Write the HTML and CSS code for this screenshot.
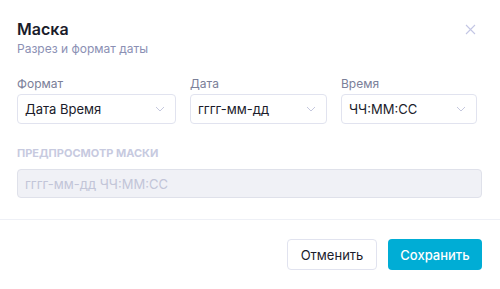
FILE: index.html
```html
<!DOCTYPE html>
<html lang="ru">
<head>
  <meta charset="UTF-8">
  <meta name="viewport" content="width=device-width, initial-scale=1.0">
  <title>Маска</title>
  <link rel="stylesheet" href="styles.css">
</head>
<body>

<div class="modal">
  <!-- Header -->
  <div class="modal-header">
    <div>
      <h2 class="modal-title">Маска</h2>
      <div class="modal-subtitle">Разрез и формат даты</div>
    </div>
    <button class="close-btn" aria-label="Закрыть">
      <svg width="11" height="11" viewBox="0 0 11 11"><path d="M1 1L10 10M10 1L1 10" stroke="#c3c6e4" stroke-width="1.1" fill="none"/></svg>
    </button>
  </div>

  <!-- Body -->
  <div class="modal-body">
    <div class="fields">
      <div class="field">
        <label>Формат</label>
        <div class="select">
          <span>Дата Время</span>
          <svg width="10" height="6" viewBox="0 0 10 6"><path d="M1 1L5 5L9 1" stroke="#c5c8de" stroke-width="1" fill="none"/></svg>
        </div>
      </div>
      <div class="field">
        <label>Дата</label>
        <div class="select">
          <span>гггг-мм-дд</span>
          <svg width="10" height="6" viewBox="0 0 10 6"><path d="M1 1L5 5L9 1" stroke="#c5c8de" stroke-width="1" fill="none"/></svg>
        </div>
      </div>
      <div class="field">
        <label>Время</label>
        <div class="select">
          <span>ЧЧ:ММ:СС</span>
          <svg width="10" height="6" viewBox="0 0 10 6"><path d="M1 1L5 5L9 1" stroke="#c5c8de" stroke-width="1" fill="none"/></svg>
        </div>
      </div>
    </div>

    <div class="preview-label">Предпросмотр маски</div>
    <div class="preview">гггг-мм-дд ЧЧ:ММ:СС</div>
  </div>

  <!-- Footer -->
  <div class="modal-footer">
    <button class="btn btn-cancel">Отменить</button>
    <button class="btn btn-save">Сохранить</button>
  </div>
</div>

</body>
</html>
```

FILE: styles.css
```css
/* General Reset */
* {
    margin: 0;
    padding: 0;
    box-sizing: border-box;
}

body {
    font-family: 'Inter', 'Noto Sans', sans-serif;
    background-color: #ffffff;
    width: 500px;
    height: 289px;
    overflow: hidden;
}

.modal {
    width: 500px;
    height: 289px;
    background-color: #ffffff;
    border-radius: 6px;
    display: flex;
    flex-direction: column;
}

.modal-header {
    display: flex;
    justify-content: space-between;
    align-items: flex-start;
    padding: 19px 24px 0 17px;
}

.modal-title {
    font-size: 16px;
    font-weight: 600;
    line-height: 20px;
    color: #1b1c2b;
}

.modal-subtitle {
    font-size: 12px;
    line-height: 16px;
    color: #8b90b4;
    margin-top: 2px;
}

.close-btn {
    border: none;
    background: none;
    margin-top: 5px;
    width: 11px;
    height: 11px;
    cursor: pointer;
}

.close-btn svg {
    display: block;
}

.modal-body {
    padding: 19px 18px 0 17px;
    border-bottom: 1px solid #eef0f6;
    height: 163px;
    flex-shrink: 0;
}

.fields {
    display: grid;
    grid-template-columns: 159px 137px 136px;
    gap: 14px;
}

.field label {
    display: block;
    font-size: 12px;
    line-height: 16px;
    color: #7b8099;
    margin-bottom: 2px;
}

.select {
    height: 30px;
    border: 1px solid #e1e3ef;
    border-radius: 4px;
    display: flex;
    align-items: center;
    justify-content: space-between;
    padding: 0 10px 0 7px;
    font-size: 13px;
    color: #1b1c2b;
}

.preview-label {
    margin-top: 22px;
    font-size: 11px;
    font-weight: 700;
    line-height: 14px;
    text-transform: uppercase;
    color: #c7cadf;
}

.preview {
    margin-top: 9px;
    width: 465px;
    height: 29px;
    background-color: #f0f1f6;
    border: 1px solid #dfe1ea;
    border-radius: 4px;
    padding: 0 7px;
    display: flex;
    align-items: center;
    font-size: 13px;
    color: #c2c5d8;
}

.modal-footer {
    display: flex;
    justify-content: flex-end;
    gap: 11px;
    padding: 19px 18px 0 17px;
}

.btn {
    height: 31px;
    border-radius: 4px;
    font-family: inherit;
    font-size: 13px;
    cursor: pointer;
}

.btn-cancel {
    width: 90px;
    background-color: #ffffff;
    border: 1px solid #e1e3ef;
    color: #1b1c2b;
}

.btn-save {
    width: 94px;
    background-color: #00add5;
    border: none;
    color: #ffffff;
    font-weight: 500;
}

.btn-save:hover {
    background-color: #0096bb;
}
```
